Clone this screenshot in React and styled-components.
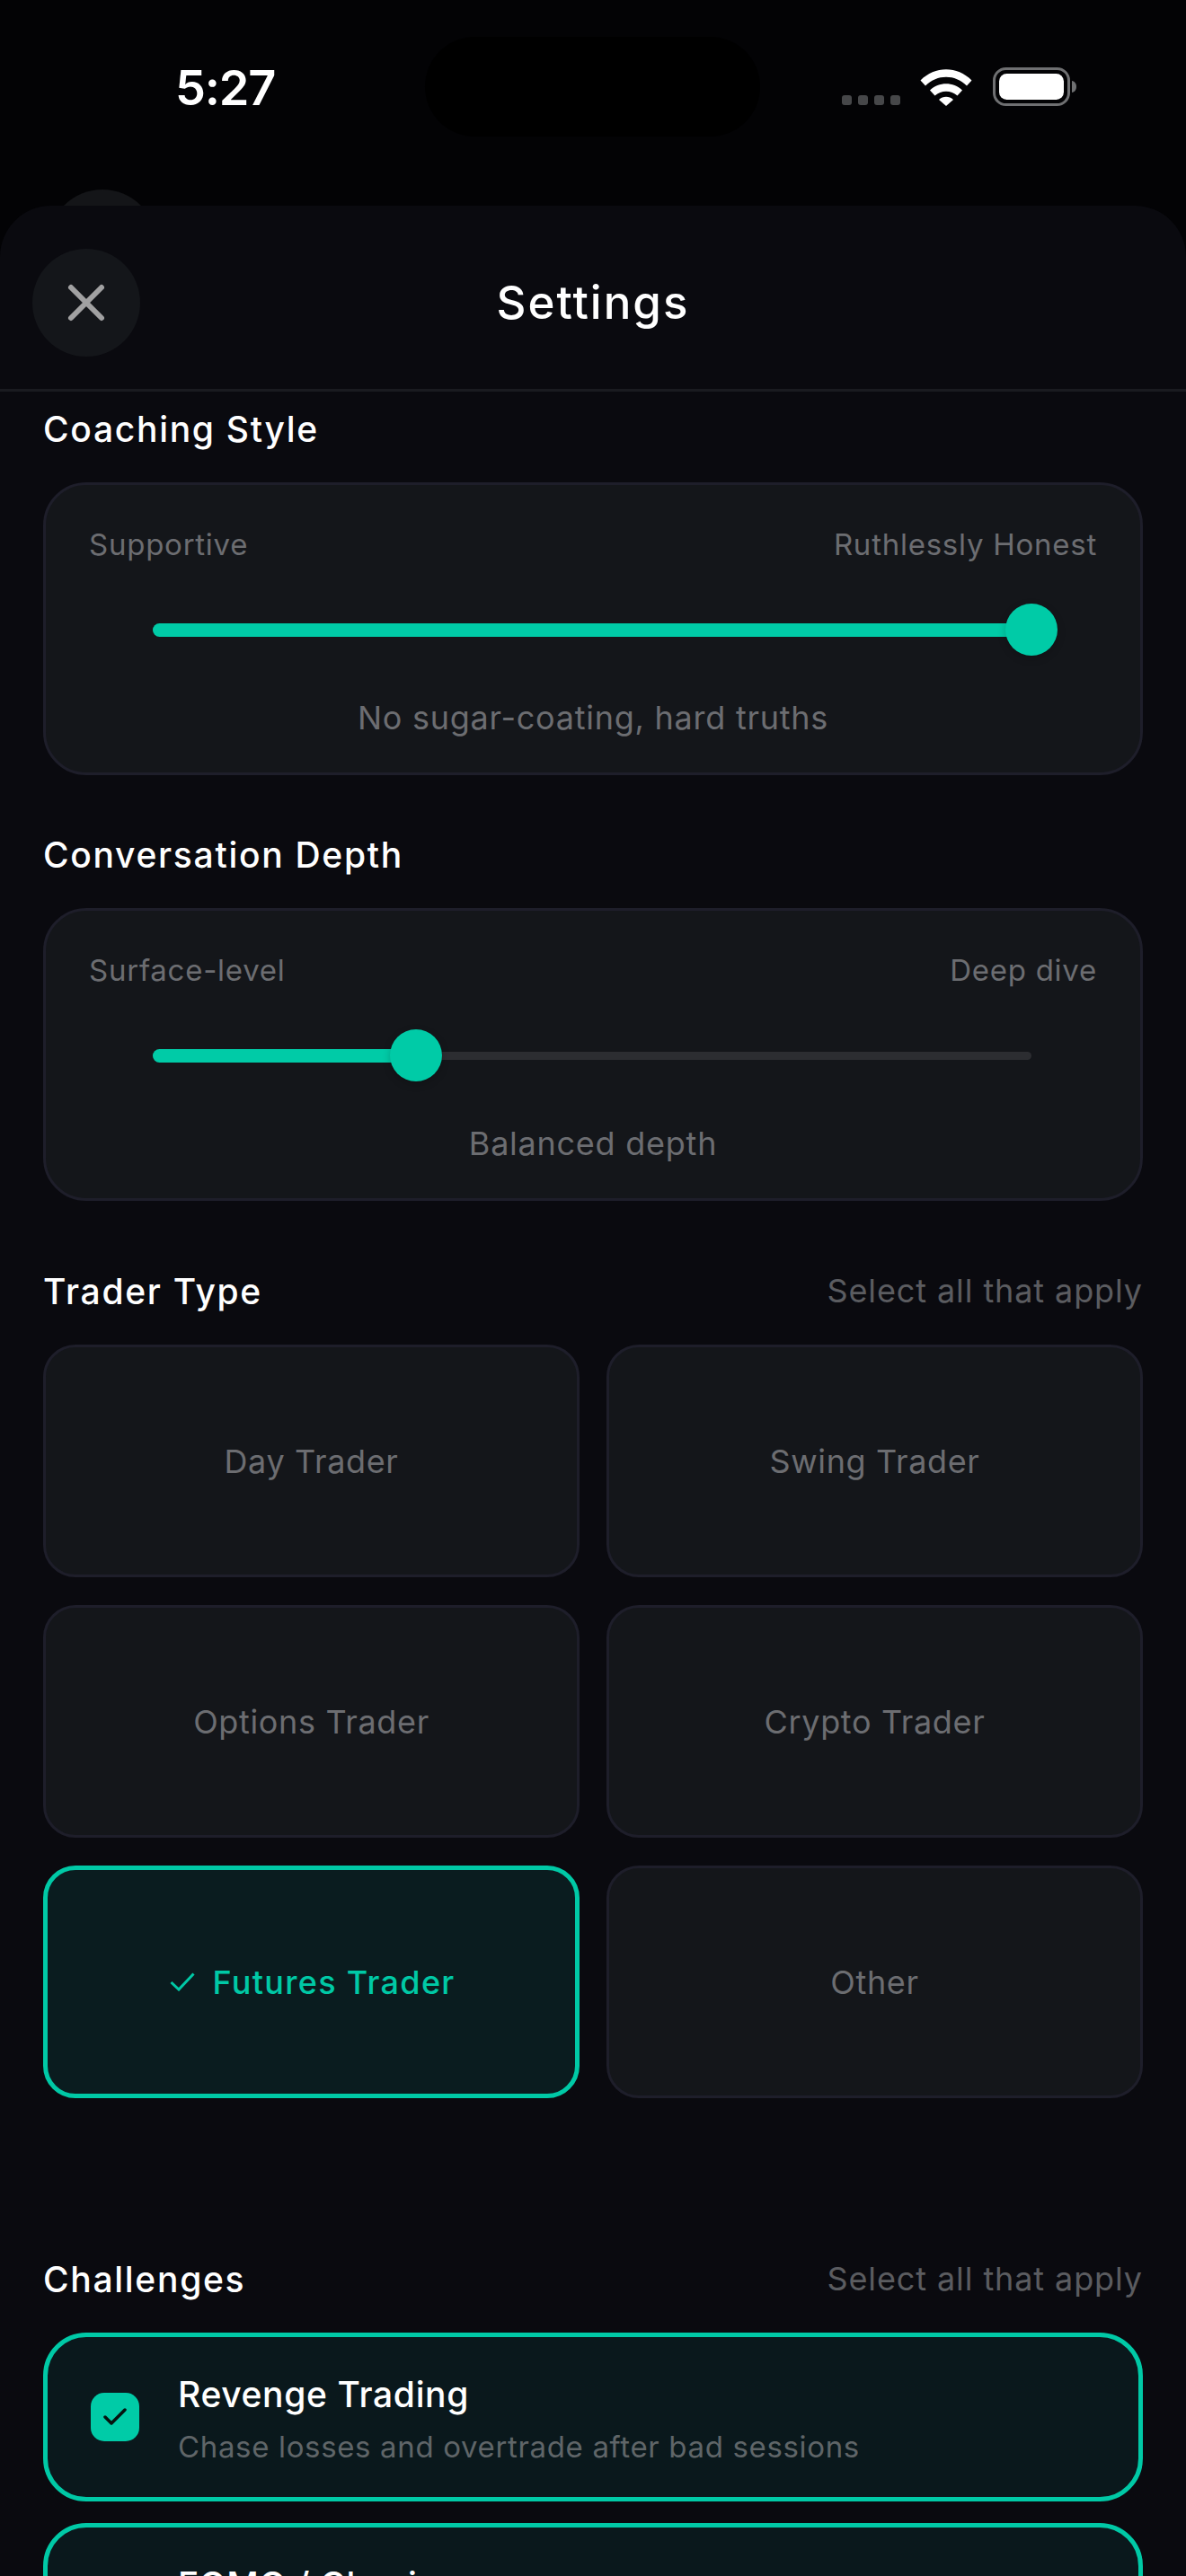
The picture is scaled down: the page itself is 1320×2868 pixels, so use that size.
import React from "react";
import styled, { createGlobalStyle } from "styled-components";

const GlobalStyle = createGlobalStyle`
  html, body {
    margin: 0;
    padding: 0;
    background: #030305;
    font-family: "Inter", "Liberation Sans", sans-serif;
  }
  * { box-sizing: border-box; }
`;

const Screen = styled.div`
  position: relative;
  width: 1320px;
  height: 2868px;
  overflow: hidden;
  background: #030305;
`;

const StatusBar = styled.div`
  display: flex;
  align-items: flex-start;
  height: 229px;
  padding: 68px 122px 0 195px;
  color: #fff;
`;

const Time = styled.div`
  font-size: 54px;
  line-height: 60px;
  font-weight: 600;
  letter-spacing: -1.2px;
`;

const Island = styled.div`
  position: absolute;
  left: 473px;
  top: 41px;
  width: 373px;
  height: 111px;
  border-radius: 56px;
  background: #000;
`;

const StatusIcons = styled.div`
  display: flex;
  align-items: flex-start;
  margin-left: auto;
  padding-top: 7px;
`;

const SignalDots = styled.div`
  display: flex;
  gap: 7px;
  margin: 31px 22px 0 0;
`;

const SignalDot = styled.span`
  width: 11px;
  height: 11px;
  border-radius: 3px;
  background: #464749;
`;

const Battery = styled.svg`
  display: block;
  margin-left: 23px;
`;

const BackCircle = styled.div`
  position: absolute;
  left: 54px;
  top: 211px;
  width: 120px;
  height: 120px;
  border-radius: 50%;
  background: #141518;
`;

const Sheet = styled.div`
  position: relative;
  height: 2639px;
  border-radius: 57px 57px 0 0;
  background: #0a0a0f;
`;

const SheetHeader = styled.div`
  display: grid;
  grid-template-columns: 120px 1fr 120px;
  align-items: center;
  height: 207px;
  padding: 12px 36px 0;
  border-bottom: 3px solid #1a1b20;
`;

const CloseButton = styled.button`
  display: flex;
  align-items: center;
  justify-content: center;
  width: 120px;
  height: 120px;
  padding: 0;
  border: 0;
  border-radius: 50%;
  background: #14161a;
`;

const SheetTitle = styled.div`
  text-align: center;
  font-size: 51px;
  line-height: 60px;
  font-weight: 500;
  letter-spacing: 2px;
  color: #fff;
`;

const SheetBody = styled.div`
  padding: 17px 48px 0;
`;

const SectionHead = styled.div`
  display: flex;
  align-items: center;
  justify-content: space-between;
  height: 48px;
  margin-top: ${(p) => p.$top || 0}px;
  margin-bottom: 36px;
`;

const SectionTitle = styled.div`
  font-size: 39px;
  font-weight: 500;
  letter-spacing: 1.7px;
  color: #fff;
`;

const SectionHint = styled.div`
  font-size: 36px;
  letter-spacing: 0.9px;
  color: #5b5c60;
`;

const SliderCard = styled.div`
  padding: 46px 48px 39px;
  border: 3px solid #1e1e2a;
  border-radius: 48px;
  background: #14161a;
`;

const SliderLabels = styled.div`
  display: flex;
  justify-content: space-between;
  font-size: 33px;
  line-height: 40px;
  letter-spacing: 0.75px;
  color: #6c6d71;
`;

const SliderArea = styled.div`
  position: relative;
  height: 58px;
  margin: 46px 73px 0 71px;
`;

const Rail = styled.div`
  position: absolute;
  left: 0;
  right: 0;
  top: 25px;
  height: 9px;
  border-radius: 5px;
  background: #2c2d31;
`;

const RailFill = styled.div`
  position: absolute;
  left: 0;
  top: 22px;
  height: 15px;
  border-radius: 8px;
  background: #00cba7;
`;

const Thumb = styled.div`
  position: absolute;
  top: 0;
  width: 58px;
  height: 58px;
  margin-left: -29px;
  border-radius: 50%;
  background: #00cba7;
  box-shadow: 0 3px 10px rgba(0, 0, 0, 0.2);
`;

const SliderCaption = styled.div`
  margin-top: 47px;
  text-align: center;
  font-size: 36px;
  line-height: 44px;
  letter-spacing: 0.75px;
  color: #6c6d71;
`;

const TypeGrid = styled.div`
  display: grid;
  grid-template-columns: 1fr 1fr;
  grid-auto-rows: 259px;
  gap: 31px 30px;
`;

const TypeCard = styled.div`
  display: flex;
  align-items: center;
  justify-content: center;
  gap: 19px;
  padding-left: ${(p) => (p.$active ? 3 : 0)}px;
  border: ${(p) => (p.$active ? "5px solid #00c9a6" : "3px solid #1e1e2a")};
  border-radius: 36px;
  background: ${(p) => (p.$active ? "#0a1c1f" : "#14161a")};
  color: ${(p) => (p.$active ? "#00c9a6" : "#6c6d71")};
  font-size: 36px;
  font-weight: ${(p) => (p.$active ? 500 : 400)};
  letter-spacing: ${(p) => (p.$active ? "1.3px" : "0.65px")};
`;

const ChallengeList = styled.div`
  display: flex;
  flex-direction: column;
  gap: 24px;
`;

const ChallengeCard = styled.div`
  display: flex;
  align-items: center;
  flex-shrink: 0;
  gap: 43px;
  height: 188px;
  padding: 0 48px;
  border: 5px solid #00c9a6;
  border-radius: 48px;
  background: #0a181c;
`;

const CheckBox = styled.div`
  display: flex;
  align-items: center;
  justify-content: center;
  flex-shrink: 0;
  width: 54px;
  height: 54px;
  border-radius: 15px;
  background: #00cba7;
`;

const ChallengeBody = styled.div`
  padding-top: 3px;
`;

const ChallengeTitle = styled.div`
  font-size: 39px;
  line-height: 48px;
  font-weight: 500;
  letter-spacing: 0.65px;
  color: #fff;
`;

const ChallengeText = styled.div`
  margin-top: 14px;
  font-size: 33px;
  line-height: 40px;
  letter-spacing: 0.65px;
  color: #5f6568;
`;

const Slider = ({ left, right, value, caption }) => (
  <SliderCard>
    <SliderLabels>
      <span>{left}</span>
      <span>{right}</span>
    </SliderLabels>
    <SliderArea>
      <Rail />
      <RailFill style={{ width: `${value}%` }} />
      <Thumb style={{ left: `${value}%` }} />
    </SliderArea>
    <SliderCaption>{caption}</SliderCaption>
  </SliderCard>
);

const traderTypes = [
  { label: "Day Trader" },
  { label: "Swing Trader" },
  { label: "Options Trader" },
  { label: "Crypto Trader" },
  { label: "Futures Trader", active: true },
  { label: "Other" },
];

const challenges = [
  { title: "Revenge Trading", text: "Chase losses and overtrade after bad sessions" },
  { title: "FOMO / Chasing", text: "Enter late because of fear of missing out" },
];

export default function App() {
  return (
    <Screen>
      <GlobalStyle />
      <StatusBar>
        <Time>5:27</Time>
        <StatusIcons>
          <SignalDots>
            <SignalDot />
            <SignalDot />
            <SignalDot />
            <SignalDot />
          </SignalDots>
          <svg width="58" height="43" viewBox="0 0 58 43">
            <path d="M0.5 14.5C16.5 -1.8 41.5 -1.8 57.5 14.5L52 20.5C39 7.5 19 7.5 6 20.5Z" fill="#fff" />
            <path d="M11 25.5C21 15.8 37 15.8 47 25.5L41.5 31.5C34.5 25 23.5 25 16.5 31.5Z" fill="#fff" />
            <path d="M21 36C25.5 31.8 32.5 31.8 37 36L29 43Z" fill="#fff" />
          </svg>
          <Battery width="93" height="43" viewBox="0 0 93 43">
            <rect x="1.5" y="1.5" width="83" height="40" rx="13" fill="none" stroke="#6f7072" strokeWidth="3" />
            <rect x="7" y="7" width="72" height="29" rx="8.5" fill="#fff" />
            <path d="M88 15C91 15.5 93 18 93 21.5C93 25 91 27.5 88 28Z" fill="#6f7072" />
          </Battery>
        </StatusIcons>
      </StatusBar>
      <Island />
      <BackCircle />
      <Sheet>
        <SheetHeader>
          <CloseButton aria-label="Close">
            <svg width="46" height="46" viewBox="0 0 46 46">
              <path d="M6 6L40 40M40 6L6 40" stroke="#a1a1a2" strokeWidth="6" strokeLinecap="round" />
            </svg>
          </CloseButton>
          <SheetTitle>Settings</SheetTitle>
          <span />
        </SheetHeader>
        <SheetBody>
          <SectionHead>
            <SectionTitle>Coaching Style</SectionTitle>
          </SectionHead>
          <Slider left="Supportive" right="Ruthlessly Honest" value={100} caption="No sugar-coating, hard truths" />

          <SectionHead $top={64}>
            <SectionTitle>Conversation Depth</SectionTitle>
          </SectionHead>
          <Slider left="Surface-level" right="Deep dive" value={30} caption="Balanced depth" />

          <SectionHead $top={76}>
            <SectionTitle>Trader Type</SectionTitle>
            <SectionHint>Select all that apply</SectionHint>
          </SectionHead>
          <TypeGrid>
            {traderTypes.map((t) => (
              <TypeCard key={t.label} $active={t.active}>
                {t.active && (
                  <svg width="28" height="21" viewBox="0 0 28 21">
                    <path d="M1.5 11L10 19L26.5 1.5" fill="none" stroke="#00c9a6" strokeWidth="3" />
                  </svg>
                )}
                {t.label}
              </TypeCard>
            ))}
          </TypeGrid>

          <SectionHead $top={177}>
            <SectionTitle>Challenges</SectionTitle>
            <SectionHint>Select all that apply</SectionHint>
          </SectionHead>
          <ChallengeList>
            {challenges.map((c) => (
              <ChallengeCard key={c.title}>
                <CheckBox>
                  <svg width="26" height="20" viewBox="0 0 26 20">
                    <path d="M2 10L9 17L24 2" fill="none" stroke="#06120f" strokeWidth="3.5" strokeLinecap="round" strokeLinejoin="round" />
                  </svg>
                </CheckBox>
                <ChallengeBody>
                  <ChallengeTitle>{c.title}</ChallengeTitle>
                  <ChallengeText>{c.text}</ChallengeText>
                </ChallengeBody>
              </ChallengeCard>
            ))}
          </ChallengeList>
        </SheetBody>
      </Sheet>
    </Screen>
  );
}
